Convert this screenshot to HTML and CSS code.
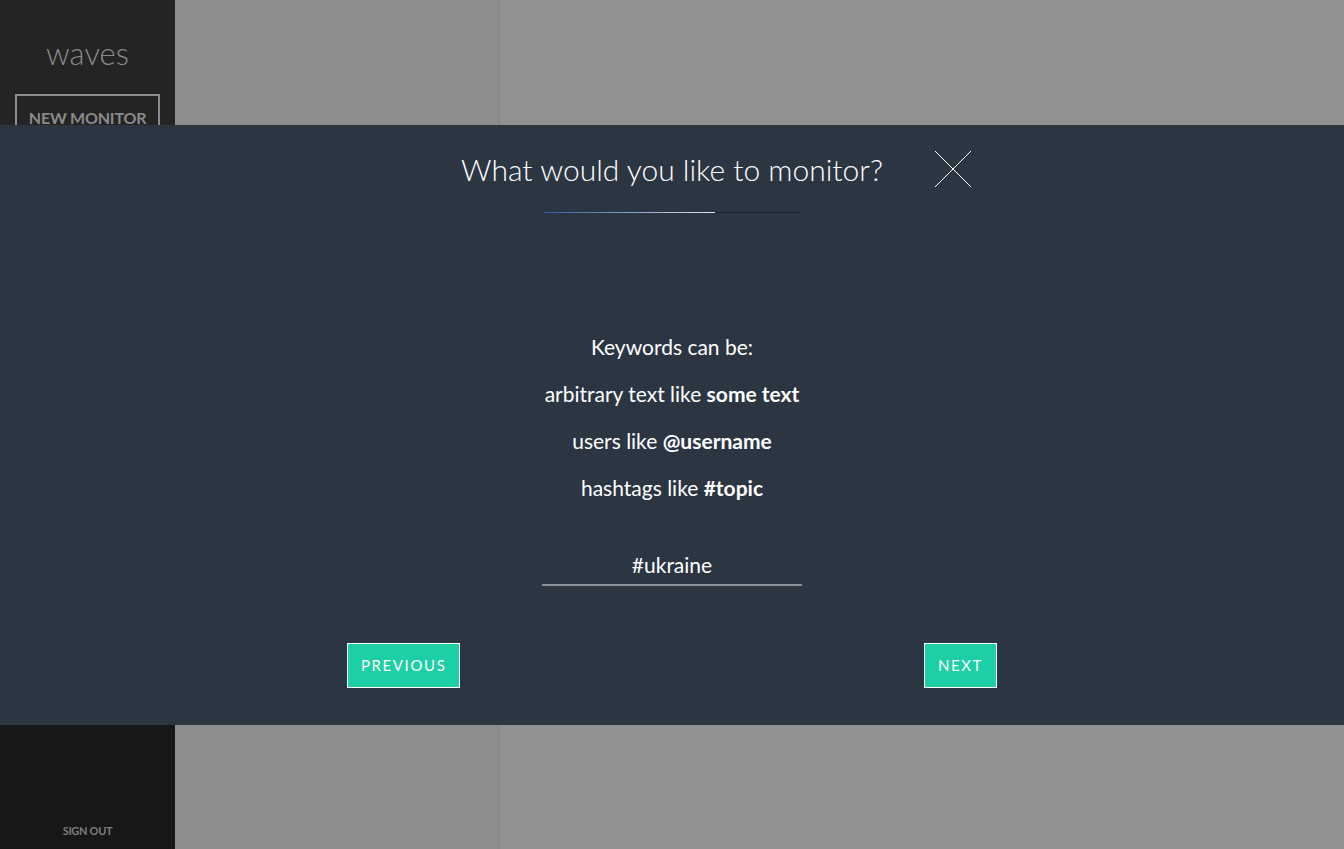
FILE: index.html
```html
<!DOCTYPE html>
<html>
<head>
<meta charset="utf-8">
<link rel="stylesheet" href="styles.css">
</head>
<body>
<div class="app">
  <aside class="sidebar">
    <div class="brand">waves</div>
    <div class="new-btn">NEW MONITOR</div>
    <div class="spacer"></div>
    <div class="signout">SIGN OUT</div>
  </aside>
  <section class="column"></section>
  <section class="content"></section>
</div>
<div class="modal">
  <div class="modal-head">
    <h1 class="title">What would you like to monitor?</h1>
    <svg class="close" width="38" height="38" viewBox="0 0 38 38"><path d="M1 1 L37 37 M37 1 L1 37" stroke="#fff" stroke-width="1" fill="none"/></svg>
  </div>
  <div class="progress"><div class="progress-fill"></div></div>
  <div class="hints">
    <p>Keywords can be:</p>
    <p>arbitrary text like <b>some text</b></p>
    <p>users like <b>@username</b></p>
    <p>hashtags like <b>#topic</b></p>
  </div>
  <div class="field">#ukraine</div>
  <div class="actions">
    <div class="btn">PREVIOUS</div>
    <div class="btn">NEXT</div>
  </div>
</div>
</body>
</html>
```

FILE: styles.css
```css
* { box-sizing: border-box; }
html, body { margin: 0; padding: 0; height: 100%; }
body {
  font-family: Lato, "Open Sans", sans-serif;
  background: #929292;
  overflow: hidden;
}
.app {
  display: flex;
  height: 849px;
}
.sidebar {
  width: 175px;
  background: linear-gradient(#242424 0, #242424 125px, #181818 725px, #171717 100%);
  display: flex;
  flex-direction: column;
  align-items: center;
}
.brand {
  margin-top: 35px;
  font-size: 31px;
  font-weight: 300;
  color: #8a8a8a;
  line-height: 36px;
}
.new-btn {
  margin-top: 23px;
  width: 145px;
  height: 46px;
  border: 2px solid #8d8d8d;
  color: #8a8a8a;
  font-weight: 700;
  font-size: 16px;
  text-align: center;
  line-height: 44px;
  letter-spacing: -0.2px;
  white-space: nowrap;
}
.spacer { flex: 1; }
.signout {
  color: #7e7e7e;
  font-weight: 700;
  font-size: 11px;
  letter-spacing: -0.3px;
  margin-bottom: 12px;
}
.column {
  width: 325px;
  background: #8d8d8d;
  border-right: 1px solid #838383;
}
.content {
  flex: 1;
  background: #929292;
}
.modal {
  position: fixed;
  left: 0;
  right: 0;
  top: 125px;
  height: 600px;
  background: #2c3643;
  display: flex;
  flex-direction: column;
  align-items: center;
  color: #fff;
}
.modal-head {
  margin-top: 22px;
  width: 1344px;
  display: flex;
  justify-content: center;
  position: relative;
}
.title {
  margin: 0;
  font-size: 30px;
  font-weight: 300;
  line-height: 44px;
}
.close {
  position: absolute;
  left: 934px;
  top: 3px;
}
.progress {
  margin-top: 21px;
  width: 256px;
  height: 1px;
  background: #1b2129;
}
.progress-fill {
  width: 171px;
  height: 1px;
  background: linear-gradient(90deg, #2a5ea6, #dfe6ee);
}
.hints {
  margin-top: 120px;
  text-align: center;
  font-size: 21px;
  line-height: 27px;
}
.hints p { margin: 0 0 20px; }
.hints b { font-weight: 700; }
.field {
  margin-top: 29px;
  width: 260px;
  text-align: center;
  font-size: 21px;
  line-height: 30px;
  padding-bottom: 4px;
  border-bottom: 2px solid #8d9199;
}
.actions {
  margin-top: 57px;
  width: 650px;
  display: flex;
  justify-content: space-between;
}
.btn {
  background: #1ccfa4;
  border: 1px solid #fff;
  color: #fff;
  height: 45px;
  padding: 0 13px;
  font-size: 15px;
  letter-spacing: 1.6px;
  line-height: 43px;
}
```
